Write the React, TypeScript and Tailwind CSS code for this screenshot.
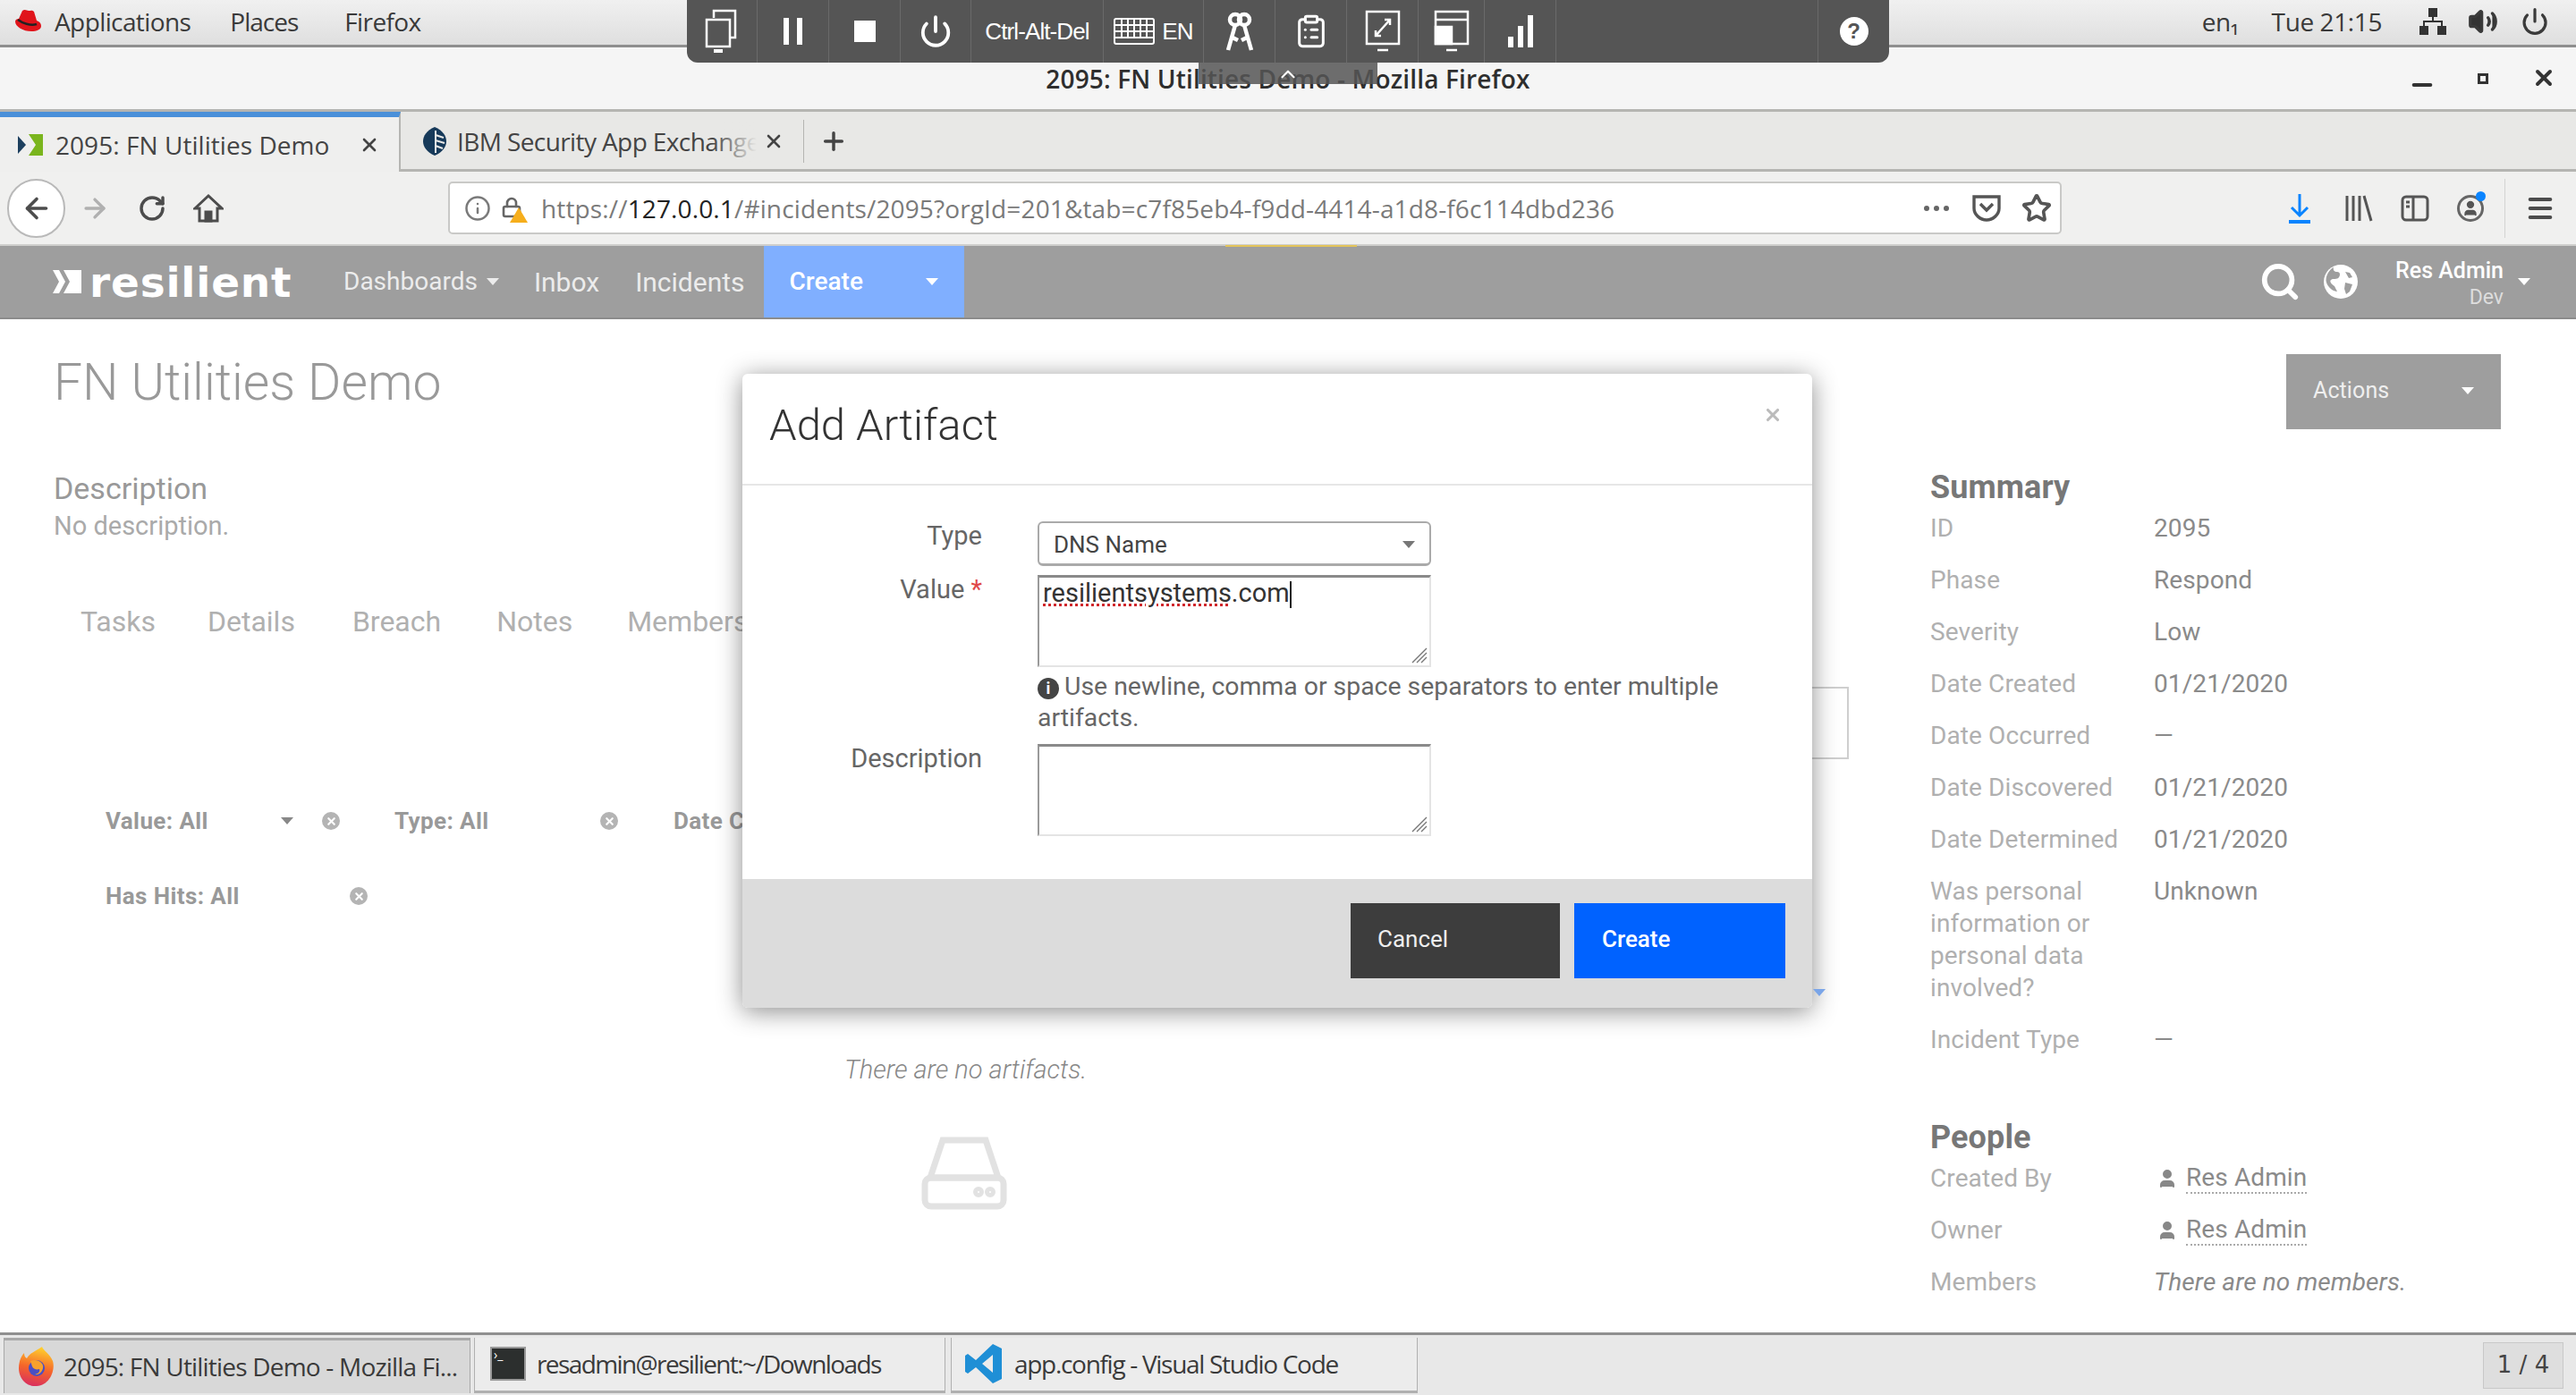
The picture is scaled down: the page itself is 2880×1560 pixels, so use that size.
import { ChevronUp, Lock, Menu, Minus, Plus, RotateCw, Search, Star, Volume2, X, ArrowLeft, ArrowRight, Power, ClipboardList, Info, User } from "lucide-react";

const summaryRows = [
  ["ID", "2095"],
  ["Phase", "Respond"],
  ["Severity", "Low"],
  ["Date Created", "01/21/2020"],
  ["Date Occurred", "—"],
  ["Date Discovered", "01/21/2020"],
  ["Date Determined", "01/21/2020"],
];

function Caret({ className }: { className: string }) {
  return <span className={`inline-block w-0 h-0 border-x-[7px] border-x-transparent border-t-[8px] ${className}`} />;
}

function ClearDot({ className }: { className?: string }) {
  return (
    <span className={`flex items-center justify-center w-[20px] h-[20px] rounded-full bg-[#b4b4b4] ${className ?? ""}`}>
      <X className="w-[13px] h-[13px] text-white" strokeWidth={4} />
    </span>
  );
}

function MonitorPair() {
  return (
    <svg width="40" height="50" viewBox="0 0 40 50" fill="none" stroke="white" strokeWidth="2.5">
      <path d="M11 10V2h24v30h-6" />
      <rect x="3" y="12" width="26" height="30" />
      <path d="M11 47h10" strokeWidth="4" />
    </svg>
  );
}

function ToolbarCell({ w, children }: { w: string; children?: React.ReactNode }) {
  return <div className={`${w} h-full flex items-center justify-center border-r border-[#6a6a6a]`}>{children}</div>;
}

function VncToolbar() {
  return (
    <div className="absolute left-[768px] top-0 w-[1344px] h-[70px] bg-[#555555] rounded-b-[12px] flex text-white font-['Liberation_Sans',sans-serif] text-[26px] tracking-[-0.9px]">
      <ToolbarCell w="w-[79px]"><MonitorPair /></ToolbarCell>
      <ToolbarCell w="w-[80px]">
        <span className="flex gap-[9px]"><span className="w-[6px] h-[30px] bg-white" /><span className="w-[6px] h-[30px] bg-white" /></span>
      </ToolbarCell>
      <ToolbarCell w="w-[80px]"><span className="w-[24px] h-[24px] bg-white" /></ToolbarCell>
      <ToolbarCell w="w-[79px]"><Power className="w-[38px] h-[38px]" strokeWidth={2.4} /></ToolbarCell>
      <ToolbarCell w="w-[148px]">Ctrl-Alt-Del</ToolbarCell>
      <ToolbarCell w="w-[112px]">
        <svg width="46" height="30" viewBox="0 0 46 30" fill="none" stroke="white" strokeWidth="2" className="mr-[8px]">
          <rect x="1" y="1" width="44" height="28" rx="2" />
          <path d="M1 8h44M1 15h44M1 22h44M9 1v21M16 1v21M23 1v21M30 1v21M37 1v21" />
        </svg>
        EN
      </ToolbarCell>
      <ToolbarCell w="w-[80px]">
        <svg width="36" height="48" viewBox="0 0 36 48" fill="none" stroke="white" strokeWidth="4.5">
          <circle cx="13" cy="11" r="6" />
          <circle cx="23" cy="11" r="6" />
          <path d="M13 17 5 45M23 17l8 28M10 31l6 3M26 31l-6 3" />
        </svg>
      </ToolbarCell>
      <ToolbarCell w="w-[80px]"><ClipboardList className="w-[40px] h-[46px]" strokeWidth={1.8} /></ToolbarCell>
      <ToolbarCell w="w-[80px]">
        <svg width="40" height="50" viewBox="0 0 40 50" fill="none" stroke="white" strokeWidth="2.5">
          <rect x="2" y="3" width="36" height="36" />
          <path d="M12 30 28 12M22 12h6v6M12 24v6h6M14 46h12" />
        </svg>
      </ToolbarCell>
      <ToolbarCell w="w-[74px]">
        <svg width="40" height="50" viewBox="0 0 40 50" fill="none" stroke="white" strokeWidth="2.5">
          <rect x="2" y="3" width="36" height="36" />
          <path d="M2 12h36" />
          <rect x="2" y="20" width="18" height="19" fill="white" />
          <path d="M14 46h12" />
        </svg>
      </ToolbarCell>
      <ToolbarCell w="w-[80px]">
        <span className="flex items-end gap-[5px] h-[36px]">
          <span className="w-[6px] h-[12px] bg-white" /><span className="w-[6px] h-[24px] bg-white" /><span className="w-[6px] h-[36px] bg-white" />
        </span>
      </ToolbarCell>
      <ToolbarCell w="w-[293px]" />
      <div className="flex-1 flex items-center justify-center">
        <span className="w-[32px] h-[32px] rounded-full bg-white text-[#555555] font-bold text-[24px] flex items-center justify-center tracking-normal">?</span>
      </div>
    </div>
  );
}

function TopPanel() {
  return (
    <div className="h-[53px] shrink-0 pb-[3px] bg-gradient-to-b from-[#f0f0f0] to-[#dfdfdf] border-b-[3px] border-[#8f8f8f] flex items-center text-[#3a3a3a] text-[28px] font-['Open_Sans',sans-serif] tracking-[-0.6px]">
      <svg width="32" height="30" viewBox="0 0 32 30" className="ml-[15px] mr-[14px]">
        <path d="M10 3c3-2 5 0 7 0s4-1 6 1l3 10c3 1 5 3 5 6 0 4-5 6-11 6C11 26 2 21 2 15c0-2 2-3 4-3z" fill="#e0141b" />
        <path d="M5 13c5 4 14 7 21 5" fill="none" stroke="#222" strokeWidth="2.5" />
      </svg>
      <span>Applications</span>
      <span className="ml-[44px] tracking-[-1px]">Places</span>
      <span className="ml-[52px]">Firefox</span>
      <span className="ml-auto">en₁</span>
      <span className="ml-[37px] tracking-[-0.4px]">Tue 21:15</span>
      <svg width="32" height="32" viewBox="0 0 32 32" fill="#333" className="ml-[41px]">
        <rect x="11" y="1" width="10" height="10" />
        <rect x="1" y="21" width="10" height="10" />
        <rect x="21" y="21" width="10" height="10" />
        <path d="M15 11h2v4h10v6h-2v-4H7v4H5v-6h10z" />
      </svg>
      <Volume2 className="w-[34px] h-[34px] ml-[23px] fill-[#333]" strokeWidth={2.4} />
      <Power className="w-[32px] h-[32px] ml-[25px] mr-[30px]" strokeWidth={2.4} />
    </div>
  );
}

function TitleBar() {
  return (
    <div className="h-[72px] shrink-0 bg-[#f5f5f5] border-b-[3px] border-[#b5b5b2] flex items-center justify-center relative text-[#2e2e2e] text-[28px] font-['Open_Sans',sans-serif] font-semibold tracking-[0.15px]">
      <span>2095: FN Utilities Demo - Mozilla Firefox</span>
      <Minus className="absolute left-[2692px] top-[26px] w-[32px] h-[32px] text-[#333]" strokeWidth={3} />
      <span className="absolute left-[2770px] top-[29px] w-[12px] h-[12px] border-[3px] border-[#333]" />
      <X className="absolute left-[2830px] top-[20px] w-[28px] h-[28px] text-[#333]" strokeWidth={3.4} />
    </div>
  );
}

function TabBar() {
  return (
    <div className="h-[67px] shrink-0 bg-[#e8e8e6] flex font-['Open_Sans',sans-serif] text-[28px] text-[#444] tracking-[-0.6px]">
      <div className="w-[448px] h-full bg-[#efefee] border-t-[6px] border-[#4a90d9] border-r-2 border-r-[#b5b5b2] flex items-center">
        <svg width="30" height="30" viewBox="0 0 30 30" className="ml-[20px]">
          <path d="M0 5l9 10-9 10z" fill="#1d3f5e" />
          <path d="M12 3h16v24H12l8-12z" fill="#7ab51d" />
        </svg>
        <span className="ml-[12px] tracking-[0.05px]">2095: FN Utilities Demo</span>
        <X className="w-[24px] h-[24px] ml-auto mr-[21px]" strokeWidth={2.6} />
      </div>
      <div className="flex-1 h-full pt-[2px] border-b-[3px] border-[#b5b5b2] flex items-center">
        <div className="w-[451px] h-[48px] border-r border-[#b5b5b2] flex items-center relative">
          <svg width="28" height="34" viewBox="0 0 28 34" className="ml-[24px] shrink-0">
            <path d="M14 1C5 5 1 11 1 17s4 12 13 16c9-4 13-10 13-16S23 5 14 1z" fill="#173a5a" />
            <path d="M15 5v25M15 10l9 3M15 16l10 3M15 22l8 3" stroke="#e8e8e6" strokeWidth="2" fill="none" />
          </svg>
          <span className="relative ml-[11px] whitespace-nowrap overflow-hidden w-[335px] leading-[48px]">
            IBM Security App Exchange
            <span className="absolute right-0 top-0 w-[50px] h-full bg-gradient-to-r from-transparent to-[#e8e8e6]" />
          </span>
          <X className="w-[24px] h-[24px] ml-[7px] shrink-0" strokeWidth={2.6} />
        </div>
        <Plus className="w-[32px] h-[32px] ml-[17px]" strokeWidth={2.6} />
      </div>
    </div>
  );
}

function NavToolbar() {
  return (
    <div className="h-[83px] shrink-0 bg-[#f0f0ef] border-b-2 border-[#cfcfcd] flex items-center text-[#4c4c4c]">
      <span className="ml-[8px] w-[65px] h-[66px] rounded-full bg-white border-2 border-[#b9b9b9] flex items-center justify-center">
        <ArrowLeft className="w-[36px] h-[36px]" strokeWidth={2.4} />
      </span>
      <ArrowRight className="w-[34px] h-[34px] ml-[16px] text-[#b0b0b0]" strokeWidth={2.4} />
      <RotateCw className="w-[32px] h-[32px] ml-[31px]" strokeWidth={2.6} />
      <svg width="34" height="34" viewBox="0 0 34 34" fill="none" stroke="#4c4c4c" strokeWidth="3" className="ml-[30px]">
        <path d="M2 17 17 3l15 14h-5v14H7V17z" />
        <rect x="14" y="21" width="6" height="10" fill="#4c4c4c" />
      </svg>
      <div className="ml-[251px] w-[1804px] h-[59px] bg-white border-2 border-[#c9c9c7] rounded-[5px] flex items-center font-['Open_Sans',sans-serif] text-[28px] tracking-[0.14px] text-[#7a7a7a]">
        <Info className="w-[30px] h-[30px] ml-[16px] shrink-0" strokeWidth={2} />
        <span className="relative ml-[11px] w-[28px] h-[32px] shrink-0">
          <Lock className="w-[24px] h-[30px] text-[#666]" strokeWidth={2.6} />
          <span className="absolute right-[-2px] bottom-0 w-0 h-0 border-x-[10px] border-x-transparent border-b-[17px] border-b-[#f6ae1c]" />
        </span>
        <span className="ml-[17px] whitespace-nowrap">https://<span className="text-[#222]">127.0.0.1</span>/#incidents/2095?orgId=201&amp;tab=c7f85eb4-f9dd-4414-a1d8-f6c114dbd236</span>
        <span className="ml-auto flex gap-[5px]"><span className="w-[6px] h-[6px] rounded-full bg-[#666]" /><span className="w-[6px] h-[6px] rounded-full bg-[#666]" /><span className="w-[6px] h-[6px] rounded-full bg-[#666]" /></span>
        <svg width="34" height="32" viewBox="0 0 34 32" fill="none" stroke="#555" strokeWidth="3.4" className="ml-[25px]">
          <path d="M3 3h28v13c0 7-7 13-14 13S3 23 3 16z" />
          <path d="M10 11l7 7 7-7" />
        </svg>
        <Star className="w-[34px] h-[34px] ml-[22px] mr-[9px] text-[#555]" strokeWidth={2.6} />
      </div>
      <svg width="28" height="34" viewBox="0 0 28 34" fill="none" stroke="#0a84ff" strokeWidth="3" className="ml-[252px]">
        <path d="M14 1v24M5 16l9 9 9-9" />
        <path d="M2 32h24" strokeWidth="4" />
      </svg>
      <svg width="32" height="30" viewBox="0 0 32 30" fill="none" stroke="#555" strokeWidth="3" className="ml-[36px]">
        <path d="M3 1v28M10 1v28M17 1v28M22 1l8 28" />
      </svg>
      <svg width="32" height="30" viewBox="0 0 32 30" fill="none" stroke="#555" strokeWidth="3" className="ml-[31px]">
        <rect x="2" y="2" width="28" height="26" rx="4" />
        <path d="M14 2v26M6 8h4M6 13h4" />
      </svg>
      <span className="relative ml-[31px] w-[30px] h-[30px] rounded-full border-[3px] border-[#666] flex items-center justify-center">
        <User className="w-[20px] h-[20px] text-[#555] fill-[#555]" />
        <span className="absolute right-[-5px] top-[-7px] w-[11px] h-[11px] rounded-full bg-[#0a84ff]" />
      </span>
      <span className="ml-[23px] w-px h-[66px] bg-[#d4d4d2]" />
      <Menu className="w-[34px] h-[34px] ml-[22px]" strokeWidth={2.8} />
    </div>
  );
}

function AppNav() {
  return (
    <div className="h-[82px] shrink-0 bg-[#9e9e9e] border-b-2 border-[#8c8c8c] flex items-center text-white font-['Roboto',sans-serif] text-[28px]">
      <svg width="34" height="28" viewBox="0 0 34 28" className="ml-[59px] shrink-0">
        <path d="M0 1h7l7 13-7 13H0l7-13z" fill="white" />
        <path d="M12 1h20v26H12l7-13z" fill="white" />
      </svg>
      <span className="ml-[7px] w-[225px] font-['DejaVu_Sans',sans-serif] font-bold text-[47px] leading-none text-white tracking-[0.8px]">resilient</span>
      <span className="ml-[59px] text-[#ececec]">Dashboards</span>
      <Caret className="ml-[10px] border-t-[#ececec]" />
      <span className="ml-[39px] text-[30px] text-[#ececec]">Inbox</span>
      <span className="ml-[40px] text-[30px] text-[#ececec]">Incidents</span>
      <div className="ml-[21px] w-[224px] h-full bg-[#80afff] flex items-center justify-between pl-[29px] pr-[29px] font-medium text-white">
        <span>Create</span>
        <Caret className="border-t-white" />
      </div>
      <Search className="w-[46px] h-[46px] ml-auto" strokeWidth={3} />
      <svg width="38" height="38" viewBox="0 0 38 38" className="ml-[26px]">
        <circle cx="19" cy="19" r="19" fill="white" />
        <path d="M11 3c-1 3 1 5 4 5s4 3 2 6-7 1-9 3 1 5 4 7l3 6c-4 0-10-4-12-10S6 5 11 3zM24 8l5 1 3 5-4 1zM24 20l8 2-3 8-4 3-2-6z" fill="#9e9e9e" />
      </svg>
      <div className="ml-[42px] flex flex-col items-end leading-[30px] pt-[5px]">
        <span className="text-[25px] font-medium text-white">Res Admin</span>
        <span className="text-[23px] text-[#dddddd]">Dev</span>
      </div>
      <Caret className="ml-[16px] mr-[51px] border-t-white" />
    </div>
  );
}

function LeftColumn() {
  return (
    <div className="w-[2158px] shrink-0 relative font-['Roboto',sans-serif] text-[#a2a2a2]">
      <h1 className="ml-[60px] mt-[37px] text-[57px] leading-[68px] font-light text-[#999]">FN Utilities Demo</h1>
      <div className="ml-[60px] mt-[64px] text-[34px] leading-[40px] text-[#999]">Description</div>
      <div className="ml-[60px] mt-[4px] text-[29px] leading-[36px] text-[#aaa]">No description.</div>
      <div className="mt-[67px] h-[44px] flex text-[32px] leading-[44px] text-[#b0b0b0]">
        <span className="ml-[90px]">Tasks</span>
        <span className="ml-[58px]">Details</span>
        <span className="ml-[64px]">Breach</span>
        <span className="ml-[62px]">Notes</span>
        <span className="ml-[61px]">Members</span>
      </div>
      <div className="mt-[51px] ml-[2026px] w-[41px] h-[81px] border-y-2 border-r-2 border-[#cfcfcf]" />
      <div className="mt-[52px] h-[34px] flex items-center text-[26px] font-bold text-[#999] leading-none tracking-[0.4px]">
        <span className="ml-[118px] w-[196px]">Value: All</span>
        <Caret className="border-t-[#888]" />
        <ClearDot className="ml-[32px]" />
        <span className="ml-[61px] w-[230px]">Type: All</span>
        <ClearDot />
        <span className="ml-[62px]">Date Created</span>
      </div>
      <div className="mt-[50px] h-[34px] flex items-center text-[26px] font-bold text-[#999] leading-none tracking-[0.4px]">
        <span className="ml-[118px] w-[273px]">Has Hits: All</span>
        <ClearDot />
      </div>
      <div className="mt-[159px] ml-[944px] text-[29px] italic text-[#888] leading-[36px] font-light">There are no artifacts.</div>
      <svg width="96" height="82" viewBox="0 0 96 82" fill="none" stroke="#e2e2e2" strokeWidth="7" className="ml-[1030px] mt-[57px]">
        <path d="M24 4h48l14 42H10z" />
        <rect x="4" y="46" width="88" height="32" rx="7" />
        <circle cx="64" cy="62" r="2.5" /><circle cx="77" cy="62" r="2.5" />
      </svg>
    </div>
  );
}

function RightColumn() {
  return (
    <div className="flex-1 relative font-['Roboto',sans-serif] text-[28px] leading-[36px] tracking-[0.1px]">
      <div className="ml-[398px] mt-[39px] w-[240px] h-[84px] bg-[#9e9e9e] flex items-center justify-between pl-[30px] pr-[30px] pb-[2px] text-[25px] text-[#efefef]">
        <span>Actions</span>
        <Caret className="border-t-white" />
      </div>
      <h2 className="mt-[45px] text-[36px] leading-[40px] font-bold text-[#777]">Summary</h2>
      <div className="mt-[8px] flex flex-col gap-[22px]">
        {summaryRows.map(([label, value]) => (
          <div key={label} className="flex">
            <span className="w-[250px] text-[#b0b0b0]">{label}</span>
            <span className="text-[#8a8a8a]">{value}</span>
          </div>
        ))}
        <div className="flex">
          <span className="w-[250px] pr-[50px] text-[#b0b0b0]">Was personal information or personal data involved?</span>
          <span className="text-[#8a8a8a]">Unknown</span>
        </div>
        <div className="flex">
          <span className="w-[250px] text-[#b0b0b0]">Incident Type</span>
          <span className="text-[#8a8a8a]">—</span>
        </div>
      </div>
      <h2 className="mt-[71px] text-[36px] leading-[40px] font-bold text-[#777]">People</h2>
      <div className="mt-[8px] flex flex-col gap-[22px]">
        {["Created By", "Owner"].map((label) => (
          <div key={label} className="flex">
            <span className="w-[250px] text-[#b0b0b0]">{label}</span>
            <span className="flex items-center text-[#8a8a8a]">
              <User className="w-[24px] h-[24px] ml-[3px] mr-[9px] fill-[#888] text-[#888]" />
              <span className="border-b-2 border-dotted border-[#aaa] leading-[32px]">Res Admin</span>
            </span>
          </div>
        ))}
        <div className="flex">
          <span className="w-[250px] text-[#b0b0b0]">Members</span>
          <span className="italic text-[#8a8a8a]">There are no members.</span>
        </div>
      </div>
    </div>
  );
}

function Textarea({ children }: { children?: React.ReactNode }) {
  return (
    <div className="relative w-[440px] h-[103px] bg-white border-t-[3px] border-l-2 border-t-[#8a8a8a] border-l-[#9a9a9a] border-b-2 border-r-2 border-b-[#e4e4e4] border-r-[#e4e4e4] pl-[4px] text-[29px] leading-[34px] text-[#333]">
      {children}
      <svg width="18" height="18" viewBox="0 0 18 18" stroke="#777" strokeWidth="1.4" className="absolute right-[2px] bottom-[2px]">
        <path d="M1 17 17 1M6 17 17 6M11 17l6-6" />
      </svg>
    </div>
  );
}

function AddArtifactModal() {
  return (
    <div className="absolute left-[830px] top-[418px] w-[1196px] h-[709px] bg-white rounded-[6px] shadow-[0_4px_28px_rgba(0,0,0,0.45)] overflow-hidden flex flex-col font-['Roboto',sans-serif] text-[#666]">
      <div className="h-[125px] shrink-0 border-b-2 border-[#e6e6e6] relative pl-[30px] pt-[28px]">
        <div className="text-[49px] leading-[60px] font-light text-[#333]">Add Artifact</div>
        <X className="absolute right-[33px] top-[35px] w-[22px] h-[22px] text-[#bbb]" strokeWidth={3.4} />
      </div>
      <div className="flex-1 pt-[40px] text-[29px] leading-[36px]">
        <div className="flex">
          <div className="w-[268px] text-right mt-[-2px]">Type</div>
          <div className="ml-[62px] w-[440px] h-[50px] rounded-[6px] border-2 border-[#aaa] border-b-[3px] flex items-center justify-between pl-[16px] pr-[16px] pt-[2px] text-[26px] text-[#444]">
            <span>DNS Name</span>
            <Caret className="border-t-[#777]" />
          </div>
        </div>
        <div className="flex mt-[10px]">
          <div className="w-[268px] text-right mt-[-2px]">Value <span className="text-[#e04848]">*</span></div>
          <div className="ml-[62px]">
            <Textarea>
              <span className="underline decoration-dotted decoration-[#d0282c]">resilientsystems</span>.com<span className="inline-block w-[2px] h-[30px] bg-[#222] align-middle" />
            </Textarea>
          </div>
        </div>
        <div className="ml-[330px] mt-[4px] w-[800px] leading-[35px] text-[28.4px] text-[#666]">
          <span className="inline-flex items-center justify-center w-[24px] h-[24px] mr-[6px] rounded-full bg-[#444] text-white text-[18px] font-bold align-[1px] leading-none">i</span>
          Use newline, comma or space separators to enter multiple artifacts.
        </div>
        <div className="flex mt-[12px]">
          <div className="w-[268px] text-right mt-[-2px]">Description</div>
          <div className="ml-[62px]"><Textarea /></div>
        </div>
      </div>
      <div className="h-[144px] shrink-0 bg-[#dcdcdc] flex items-start justify-end gap-[16px] pr-[30px] pt-[27px] text-[26px] text-white">
        <div className="w-[234px] h-[84px] bg-[#3d3d3d] flex items-center pl-[30px] pb-[4px] text-[#eee]">Cancel</div>
        <div className="w-[236px] h-[84px] bg-[#0062ff] flex items-center pl-[31px] pb-[4px] font-medium">Create</div>
      </div>
    </div>
  );
}

function Taskbar() {
  return (
    <div className="h-[70px] shrink-0 bg-[#e8e8e8] border-t-[3px] border-[#8f8f8f] flex items-center font-['Open_Sans',sans-serif] text-[28px] text-[#3a3a3a]">
      <div className="ml-[4px] w-[522px] h-[62px] bg-[#d8d8d8] border-t-[3px] border-x border-[#a8a8a8] flex items-center tracking-[-0.8px]">
        <svg width="40" height="46" viewBox="0 0 40 46" className="ml-[16px] shrink-0">
          <defs>
            <linearGradient id="fx" x1="0.6" y1="0" x2="0.4" y2="1">
              <stop offset="0" stopColor="#ffd22e" />
              <stop offset="0.55" stopColor="#f5652a" />
              <stop offset="1" stopColor="#d92f5e" />
            </linearGradient>
          </defs>
          <path d="M26 1c1 4 9 8 12 16 3 10-3 27-18 28C8 46 0 36 0 25 0 17 3 11 6 8c0 3 1 5 3 6 3-6 10-8 17-13z" fill="url(#fx)" />
          <circle cx="20" cy="25" r="9" fill="#4a4fc4" />
          <path d="M13 17c5-2 12-1 14 5 1 6-4 11-9 10 4-1 6-3 5-6-3 1-7 0-8-3z" fill="#f7a12c" />
        </svg>
        <span className="ml-[10px] whitespace-nowrap">2095: FN Utilities Demo - Mozilla Fi...</span>
      </div>
      <div className="ml-[4px] w-[527px] h-[62px] bg-[#ececec] border-x border-b-[3px] border-[#b0b0b0] flex items-center tracking-[-1.6px]">
        <span className="ml-[17px] w-[40px] h-[38px] bg-[#2c2f2e] border-2 border-[#999] text-[14px] leading-none text-white pl-[2px] tracking-normal">›_</span>
        <span className="ml-[12px] whitespace-nowrap">resadmin@resilient:~/Downloads</span>
      </div>
      <div className="ml-[6px] w-[522px] h-[62px] bg-[#ececec] border-x border-b-[3px] border-[#b0b0b0] flex items-center tracking-[-1.3px]">
        <svg width="44" height="46" viewBox="0 0 44 46" className="ml-[14px]">
          <path d="M32 1 42 6v34l-10 5L13 27l-9 7-3-2V14l3-2 9 7zM32 13 20 23l12 10z" fill="#1f8fd6" />
        </svg>
        <span className="ml-[12px] whitespace-nowrap">app.config - Visual Studio Code</span>
      </div>
      <div className="ml-auto mr-[14px] w-[90px] h-[52px] bg-[#dedede] border border-[#c8c8c8] flex items-center justify-center font-['DejaVu_Sans',sans-serif] text-[26px] text-[#444]">1 / 4</div>
    </div>
  );
}

export default function App() {
  return (
    <div className="relative w-[2880px] h-[1560px] overflow-hidden bg-white flex flex-col">
      <TopPanel />
      <TitleBar />
      <TabBar />
      <NavToolbar />
      <AppNav />
      <div className="flex-1 flex min-h-0 overflow-hidden">
        <LeftColumn />
        <RightColumn />
      </div>
      <Taskbar />

      <VncToolbar />
      <div className="absolute left-[1340px] top-[70px] w-[200px] h-[24px] bg-[#555555]/85 flex justify-center">
        <ChevronUp className="w-[26px] h-[26px] text-white" strokeWidth={2} />
      </div>
      {/* page load progress line under the toolbar */}
      <div className="absolute left-[1370px] top-[274px] w-[147px] h-[2px] bg-[#e3c45a]" />
      <AddArtifactModal />
      <Caret className="absolute left-[2027px] top-[1106px] border-t-[#7aa5e8]" />
    </div>
  );
}
